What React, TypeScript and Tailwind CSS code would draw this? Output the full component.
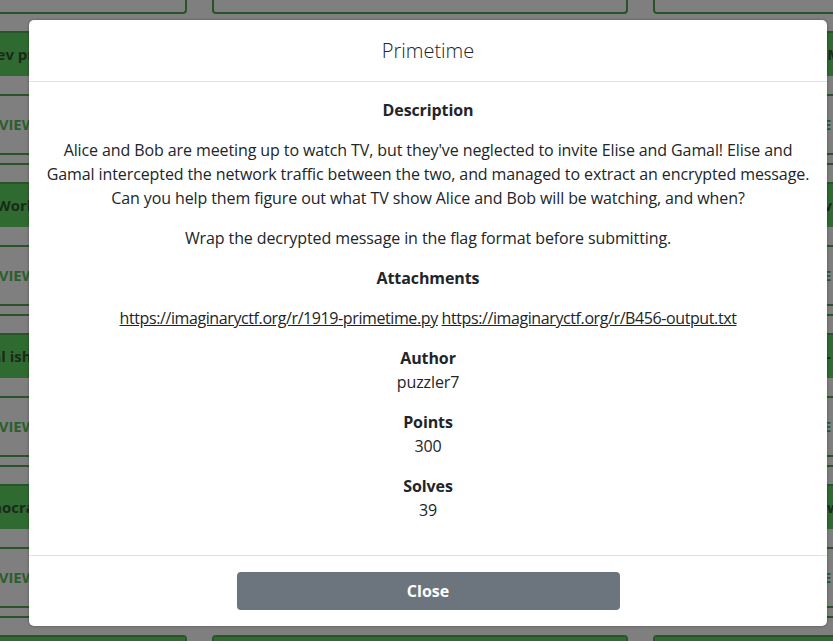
import React from 'react'

const font = { fontFamily: "'Open Sans', 'Liberation Sans', sans-serif" }

const BgCard: React.FC<{ label: string; sub: string }> = ({ label, sub }) => (
  <div className="h-[134px] shrink-0 rounded-[4px] border-2 border-[#295429] overflow-hidden flex flex-col">
    <div className="h-[43px] shrink-0 bg-[#2f6b31] flex items-center justify-center text-[15px] font-bold text-[#1a2a1a] whitespace-nowrap">
      {label}
    </div>
    <div className="h-[18px]" />
    <div className="border-t-2 border-[#295429]" />
    <div className="flex-1 flex items-center justify-center text-[15px] font-bold text-[#2b5e2b] whitespace-nowrap">{sub}</div>
    <div className="border-t-2 border-[#295429]" />
    <div className="h-[8px]" />
  </div>
)

const Column: React.FC<{ width: string; labels: string[] }> = ({ width, labels }) => (
  <div className={`${width} shrink-0 flex flex-col gap-[17px]`}>
    <div className="h-[14px] shrink-0 rounded-b-[4px] border-2 border-t-0 border-[#295429]" />
    {labels.map((l, i) => (
      <BgCard key={i} label={l} sub="VIEW CHALLENGE" />
    ))}
  </div>
)

export default function App() {
  return (
    <div className="relative w-[833px] h-[641px] overflow-hidden bg-[#7f7f7f]" style={font}>
      {/* page behind the overlay */}
      <div className="flex gap-[25px] -ml-[60px]">
        <Column
          width="w-[247px]"
          labels={['Babyrev pro max (50pts) - Rev', 'Roos World v2 (150pts) - Web', 'Normal ish (100pts) - Forensics', 'Democracy (200pts) - Web', 'Hash me (300pts) - Misc']}
        />
        <Column
          width="w-[416px]"
          labels={['Secure encoding (100pts) - Crypto', 'Awkward bypass (150pts) - Web', 'Sources (100pts) - Rev', 'Login (200pts) - Web', 'Spelling test (300pts) - Misc']}
        />
        <Column
          width="w-[227px]"
          labels={['Memory pins (250pts) - Misc pi', 'Pwnb (150pts) - Rev R', 'Flag checker (100pts) - Web', 'Blackjack (100pts) - Pwn k', 'Off by one (300pts) - Misc']}
        />
      </div>

      {/* modal */}
      <div className="absolute left-[29px] top-[20px] w-[798px] bg-white rounded-[5px] shadow-[0_0_3px_rgba(0,0,0,0.35)] text-[#212529] text-[16px] leading-6">
        <div className="h-[62px] border-b border-[#dee2e6] flex items-center justify-center">
          <h5 className="text-[20px] font-light leading-[30px] text-[#212529]">Primetime</h5>
        </div>
        <div className="px-4 pt-4 pb-[17px] text-center tracking-[-0.1px]">
          <p className="mb-4 font-bold">Description</p>
          <p className="mb-4">
            Alice and Bob are meeting up to watch TV, but they've neglected to invite Elise and Gamal! Elise and
            <br />
            Gamal intercepted the network traffic between the two, and managed to extract an encrypted message.
            <br />
            Can you help them figure out what TV show Alice and Bob will be watching, and when?
          </p>
          <p className="mb-4">Wrap the decrypted message in the flag format before submitting.</p>
          <p className="mb-4 font-bold">Attachments</p>
          <p className="mb-4 tracking-[-0.4px]">
            <a className="underline" href="#">https://imaginaryctf.org/r/1919-primetime.py</a>{' '}
            <a className="underline" href="#">https://imaginaryctf.org/r/B456-output.txt</a>
          </p>
          <div className="mb-4">
            <p className="font-bold">Author</p>
            <p>puzzler7</p>
          </div>
          <div className="mb-4">
            <p className="font-bold">Points</p>
            <p>300</p>
          </div>
          <div className="mb-4">
            <p className="font-bold">Solves</p>
            <p>39</p>
          </div>
        </div>
        <div className="border-t border-[#dee2e6] pt-4 pb-4 flex justify-center">
          <button className="w-[383px] h-[38px] rounded-[4px] bg-[#6c757d] text-white font-bold text-[16px]">Close</button>
        </div>
      </div>
    </div>
  )
}
